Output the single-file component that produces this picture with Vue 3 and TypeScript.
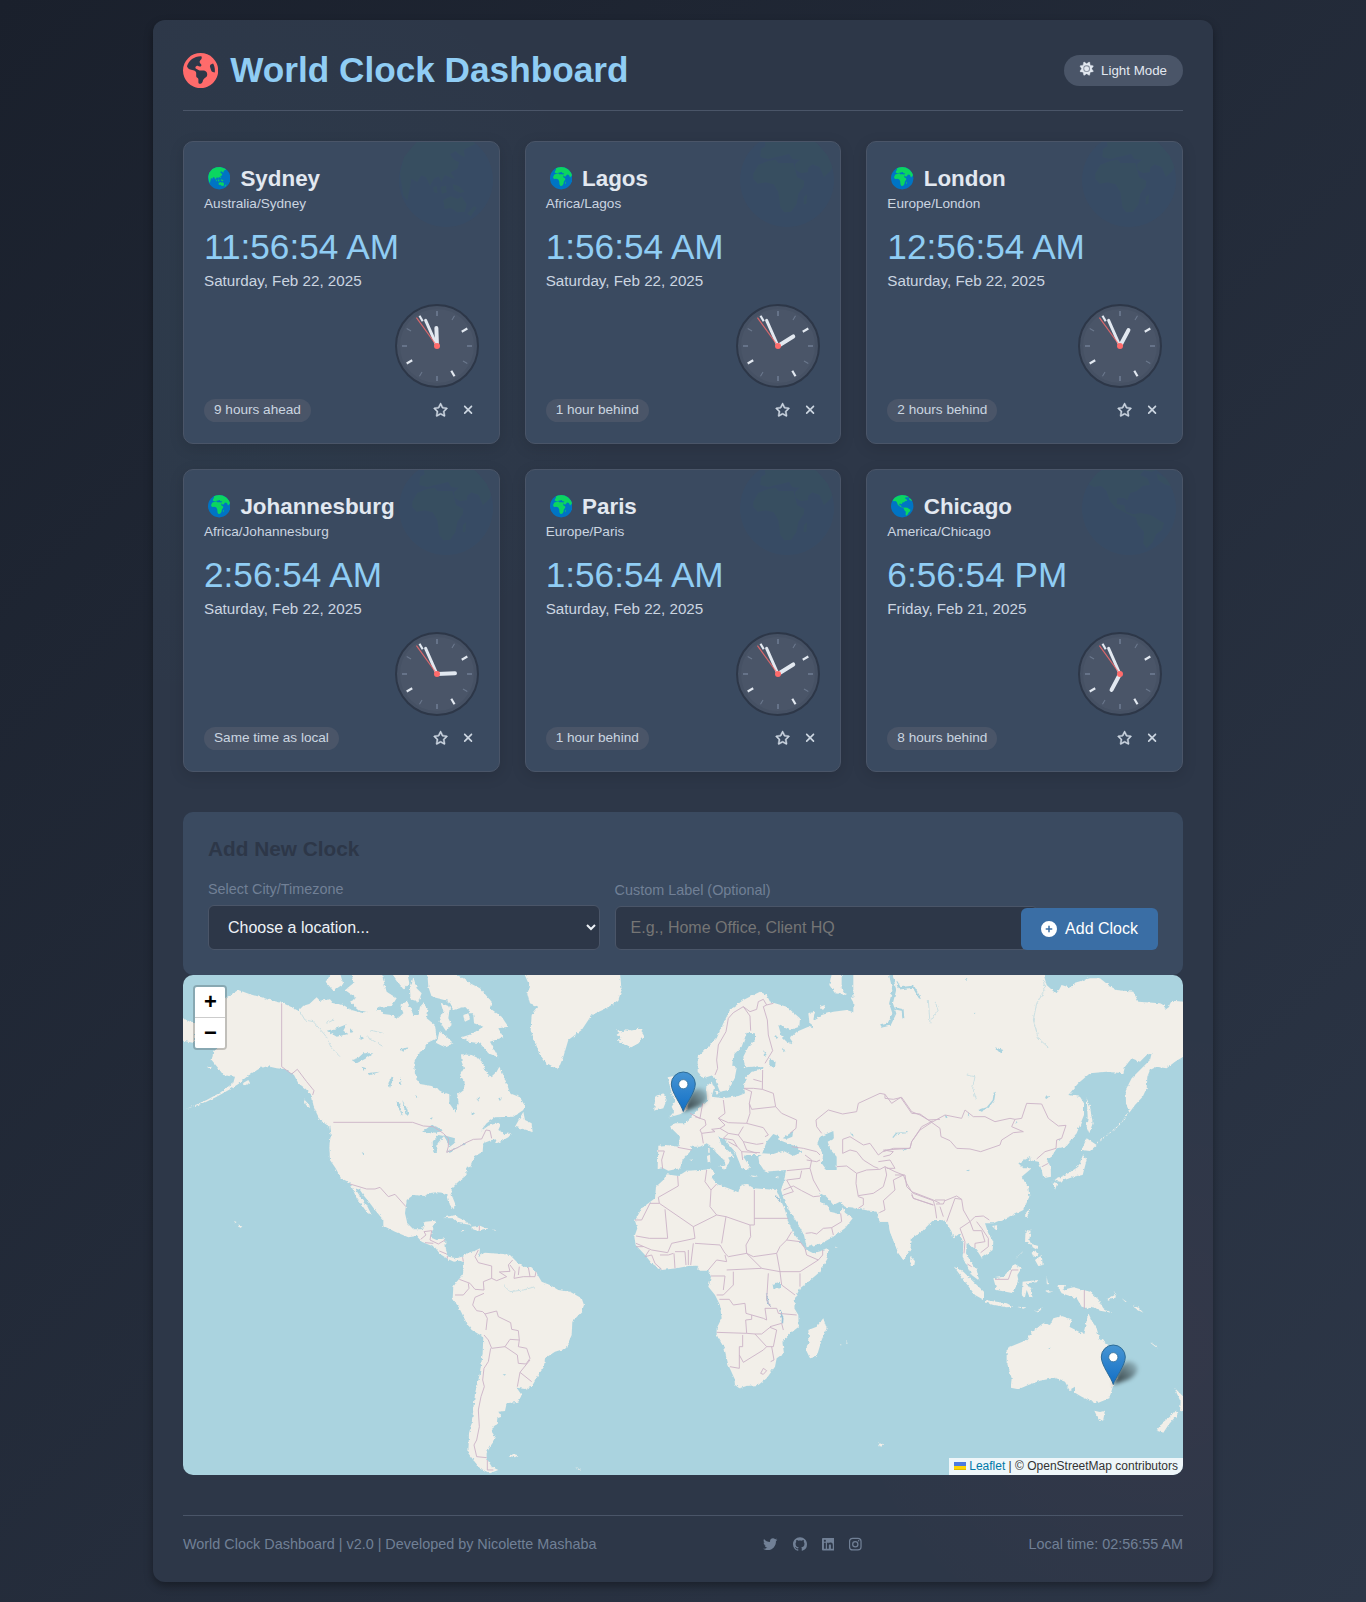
<script setup lang="ts">
type Globe = 'asia' | 'africa' | 'america'

interface City {
  name: string
  zone: string
  time: string
  date: string
  diff: string
  globe: Globe
}

const cities: City[] = [
  { name: 'Sydney', zone: 'Australia/Sydney', time: '11:56:54 AM', date: 'Saturday, Feb 22, 2025', diff: '9 hours ahead', globe: 'asia' },
  { name: 'Lagos', zone: 'Africa/Lagos', time: '1:56:54 AM', date: 'Saturday, Feb 22, 2025', diff: '1 hour behind', globe: 'africa' },
  { name: 'London', zone: 'Europe/London', time: '12:56:54 AM', date: 'Saturday, Feb 22, 2025', diff: '2 hours behind', globe: 'africa' },
  { name: 'Johannesburg', zone: 'Africa/Johannesburg', time: '2:56:54 AM', date: 'Saturday, Feb 22, 2025', diff: 'Same time as local', globe: 'africa' },
  { name: 'Paris', zone: 'Europe/Paris', time: '1:56:54 AM', date: 'Saturday, Feb 22, 2025', diff: '1 hour behind', globe: 'africa' },
  { name: 'Chicago', zone: 'America/Chicago', time: '6:56:54 PM', date: 'Friday, Feb 21, 2025', diff: '8 hours behind', globe: 'america' },
]

const globes: Record<Globe, { box: string; cx: number; cy: number; land: string }> = {
  africa: {
    box: '245 368 282 282', cx: 386, cy: 509,
    land: 'M318 386L345 374 386 368 430 375 475 398 508 436 522 470 516 482 497 500 484 470 462 462 450 472 448 486 428 488 412 478 410 462 425 448 402 446 392 430 372 436 352 440 330 446 306 440 308 416 322 408ZM285 490L300 464 330 452 352 448 360 458 405 458 416 500 438 512 436 528 420 550 414 582 398 604 378 606 366 590 360 545 346 522 322 516 298 520 285 505ZM437 560L446 552 444 580 436 582Z',
  },
  asia: {
    box: '775 398 282 282', cx: 916, cy: 539,
    land: 'M778 520L790 470 830 422 880 402 930 399 985 417 1005 430 985 440 970 448 972 470 955 462 945 452 928 462 940 478 955 486 950 505 930 516 942 536 926 530 912 524 902 545 894 528 880 534 868 556 856 530 842 525 830 545 812 535 808 560 800 600 788 585ZM878 560L888 558 890 578 880 576ZM900 560L916 556 918 576 904 580ZM936 552L955 558 972 574 958 578 940 568ZM908 600L930 588 952 596 962 588 978 612 972 634 950 636 930 622 912 626ZM980 640L1000 618 1008 622 990 648Z',
  },
  america: {
    box: '664 2 282 282', cx: 805, cy: 143,
    land: 'M684 72L710 38 750 14 800 3 850 9 890 28 872 34 850 30 838 44 860 54 868 74 846 76 828 92 808 98 800 120 790 112 770 112 768 132 790 134 796 154 818 162 840 158 870 164 892 178 910 188 904 208 886 222 876 246 858 264 848 250 850 214 832 194 826 172 800 160 766 142 748 122 738 92 722 76 700 80ZM888 40L915 52 932 78 912 72 892 58Z',
  },
}

function hands(time: string) {
  const [h, m, s] = time.split(' ')[0].split(':').map(Number)
  return { hour: ((h % 12) + m / 60) * 30, minute: m * 6, second: s * 6 }
}

const ticks = Array.from({ length: 12 }, (_, i) => ({
  angle: i * 30,
  kind: i % 3 === 2 ? 'bright' : i % 3 === 0 ? 'quarter' : 'minor',
  inner: i % 3 === 2 ? -28.6 : -30,
}))

const markers = [
  { id: 'london', x: 500.3, y: 136.5 },
  { id: 'sydney', x: 930.3, y: 409.5 },
]

const americas = [
  'M165 115L205 90 240 103 275 112 300 120 340 130 362 140 385 152 400 137 418 132 440 112 450 122 480 118 490 130 520 135 545 150 575 158 600 150 630 150 640 162 665 165 680 178 700 160 700 130 712 125 722 145 730 165 745 165 750 140 760 130 775 150 770 175 795 195 800 235 770 250 765 265 745 280 732 310 735 340 750 372 785 378 815 395 838 403 838 430 858 458 866 430 862 405 882 390 884 365 870 345 882 325 875 305 873 283 905 285 925 295 940 310 945 330 962 352 980 335 988 320 1000 345 1012 375 1020 400 1050 412 1063 435 1060 450 1030 470 975 472 950 490 930 515 955 497 985 488 992 494 985 510 1005 522 1025 520 1015 532 990 545 975 552 980 538 965 540 940 550 938 575 912 590 900 620 888 625 890 645 865 665 845 685 845 705 855 730 852 748 840 735 832 705 820 698 800 697 775 700 765 708 730 705 710 720 705 760 712 790 730 808 755 808 765 785 797 782 790 805 780 832 800 840 825 835 828 870 835 890 860 895 875 890 885 908 870 902 852 905 835 898 810 882 795 862 755 845 740 828 715 832 675 815 640 797 640 780 615 750 600 730 580 705 570 690 555 685 572 712 590 735 605 765 590 755 570 728 560 715 545 680 540 668 513 655 497 625 480 600 478 560 482 525 478 500 450 480 440 460 430 435 425 405 405 385 385 370 372 345 345 328 320 325 290 318 270 325 245 340 225 355 205 372 180 388 140 410 100 430 50 446 110 420 150 398 190 368 195 350 160 345 145 325 125 300 130 275 145 262 90 255Z',
  'M875 895L890 880 915 872 930 865 928 885 945 878 965 880 1000 882 1020 885 1040 905 1060 920 1085 922 1100 940 1115 965 1140 975 1165 990 1200 995 1235 1015 1242 1035 1235 1055 1207 1085 1205 1125 1188 1165 1155 1175 1125 1195 1122 1220 1105 1245 1085 1280 1065 1287 1040 1283 1055 1305 1045 1325 1010 1330 1005 1353 985 1355 995 1370 982 1375 980 1395 962 1410 978 1435 960 1460 950 1480 950 1495 965 1520 985 1530 960 1540 930 1525 910 1500 895 1480 897 1420 905 1390 910 1350 915 1300 930 1240 938 1180 940 1130 905 1110 888 1085 868 1045 848 1015 850 980 860 965 878 945 882 915Z',
  'M30 170L75 192 75 250 30 240ZM485 40L467 65 490 92 520 72 510 40ZM545 40L550 70 525 90 560 115 540 125 570 152 610 157 630 140 665 138 680 115 650 95 640 60 635 40ZM665 40L700 88 718 70 712 40ZM730 50L740 85 755 100 745 125 722 118 720 90ZM772 40L775 80 785 110 835 122 850 150 885 140 910 165 912 190 940 200 905 222 875 232 895 245 930 250 955 280 985 292 960 245 1000 232 985 205 1015 200 995 170 960 145 965 125 930 85 900 70 880 55 850 40ZM808 215L830 230 850 250 825 262 800 250ZM812 128L840 140 835 175 845 195 828 213 806 180 820 155ZM690 135L712 125 720 150 700 158ZM880 165L895 160 900 178 885 185Z',
  'M1062 40L1080 80 1072 100 1080 130 1105 140 1085 165 1082 210 1095 245 1110 285 1130 310 1165 328 1180 290 1195 240 1235 210 1265 165 1310 145 1345 120 1355 90 1350 40ZM1335 208L1350 220 1340 225 1352 232 1345 242 1380 263 1405 250 1422 230 1412 205 1385 212 1370 208 1360 217Z',
  'M1060 455L1035 500 1070 510 1088 517 1085 490 1065 480ZM820 774L850 766 880 780 905 795 870 790 850 775ZM905 800L930 797 955 808 930 813 905 808ZM872 810L886 811 880 815ZM965 809L978 809 977 812ZM1018 1488L1030 1482 1045 1486 1035 1492ZM1215 1520L1233 1530 1230 1532ZM205 793L217 800 210 804ZM192 783L200 786 196 789ZM445 462L460 470 488 492 480 496 455 480ZM402 418L418 435 420 445 408 435ZM172 774L178 776ZM218 370L235 360 240 368 225 376ZM110 320L125 320 122 328Z',
]

const americaLakes = [
  'M755 517L785 495 800 500 818 512 800 518 775 516ZM790 577L788 545 805 525 822 528 803 550 801 575ZM820 525L838 530 855 535 853 550 838 562 832 545ZM830 577L840 568 866 562 840 578ZM865 557L888 548 885 555ZM470 212L500 205 530 193 520 212 535 222 500 230ZM545 300L565 293 580 280 610 280 585 297 560 310ZM678 424L690 432 698 468 688 450ZM697 420L710 445 717 468 706 462ZM575 576L582 580 582 588ZM998 1243L1008 1242 1004 1247ZM590 340L630 335 600 346ZM925 880L932 888 926 890ZM655 370L665 350 670 352 660 385ZM740 405L745 410 738 414ZM570 225L582 235 572 240ZM540 205L550 215 540 218ZM690 268L715 262 700 275ZM575 320L590 325 580 332ZM920 415L930 410 925 425ZM985 415L995 412 990 424ZM690 350L696 372 690 375ZM905 455L915 460 905 468ZM780 475L788 472 784 482Z',
]

const americaBorders =
  'M335 130V320L365 342 382 328 410 365 432 392 428 405M490 487H728L760 498 790 500 820 520 835 535V560L830 577 865 562 888 548 910 538 935 537 948 510 960 512 965 535M540 672L590 687 615 687 630 682 655 710 675 703 708 740M752 838L768 825 762 815 785 812 780 840 805 852 825 840M765 848L790 850M808 873L830 882M832 888V896M878 892L880 905M925 870L915 890 925 908 965 918V955L980 962 1010 950 988 936 1020 934 1015 915 1028 900M1020 915L1035 935 1032 955 1060 950 1095 950 1098 935M1048 920L1045 945M1075 922L1080 950M868 958L900 970 915 988 942 990 940 965 965 955M855 1005L880 1005 897 985 895 970M942 1000L915 1012 908 1035 920 1052 938 1055 945 1062 980 1053 985 1070 1022 1088 1025 1108 1045 1112 1048 1140 1020 1138 1005 1160 965 1165 955 1140 942 1125M945 1062L952 1075 948 1110M1005 1160L1042 1185 1045 1210 1068 1212 1080 1195 1070 1165 1045 1160 1048 1140M962 1165L955 1205 942 1225 938 1260 943 1280 933 1310 925 1350 928 1400 920 1440 912 1455 920 1490 950 1493M952 1500V1530H970M1080 1200L1050 1237 1085 1265M1050 1237L1042 1280M928 797V812'

const west = [
  'M175 557L200 555 235 560 240 530 210 500 225 490 255 490 270 475 300 440 322 425 318 380 335 365 342 385 335 410 370 415 415 408 435 400 432 380 440 350 455 335 490 328 490 318 435 322 430 290 445 260 465 240 465 220 440 218 425 260 400 285 397 315 410 325 405 350 395 370 385 390 360 395 350 370 340 345 310 355 293 335 293 290 325 260 350 235 370 190 390 150 430 120 480 95 500 105 510 125 560 140 600 175 598 200 570 210 535 195 545 230 560 245 580 250 570 235 590 215 625 200 640 205 628 185 625 160 645 155 640 180 665 165 700 155 740 150 765 158 768 140 750 110 800 130 835 165 820 110 838 40 1100 40 1100 780 1000 780 965 815 935 835 930 870 910 900 895 880 870 815 865 785 840 785 832 770 850 762 825 745 780 745 735 740 720 725 700 735 680 710 660 700 660 725 685 740 690 755 720 762 728 742 735 758 758 775 735 805 700 830 665 850 620 862 612 825 590 785 570 755 550 715 543 690 553 660 558 630 530 632 495 635 478 610 475 590 485 585 440 585 430 590 450 622 440 630 425 625 415 600 405 575 375 540 355 528 365 555 405 590 385 592 390 605 378 620 372 600 350 580 335 560 320 550 300 560 275 560 270 575 248 600 240 625 205 632 190 625 173 627Z',
  'M200 643L235 648 260 632 300 630 338 628 342 640 335 652 350 672 385 685 415 697 422 675 440 672 462 685 500 688 530 690 540 715 555 750 565 785 580 820 600 845 620 870 640 880 685 867 683 895 660 935 620 970 600 985 585 1015 583 1045 595 1065 596 1100 565 1125 547 1145 552 1180 530 1195 525 1220 500 1255 475 1275 440 1278 418 1285 405 1275 403 1255 385 1215 373 1165 350 1125 350 1105 365 1075 360 1035 345 1005 325 980 333 950 325 932 300 932 290 917 265 918 230 925 185 930 155 910 135 885 107 855 103 830 112 805 105 782 125 745 165 715 168 680 190 660Z',
  'M670 1075L680 1105 665 1140 650 1190 630 1195 618 1170 628 1140 625 1110 650 1100ZM203 352L222 348 235 365 240 385 252 410 265 430 262 450 240 463 208 472 222 455 215 440 225 425 215 400ZM165 410L190 400 200 420 190 445 163 452ZM358 620L380 615 378 630ZM321 588L330 584 331 605 323 607ZM324 565L329 565 329 580 325 578ZM448 646L475 649 460 651ZM525 652L540 648 533 655ZM695 40L725 45 725 85 740 105 705 100 688 75ZM660 140L675 135 672 148 662 150ZM930 888L945 903 943 915 932 917ZM345 392L360 398 350 404ZM835 1450L850 1452 840 1460ZM705 860L714 862 706 863ZM435 350L442 352 436 360ZM270 600L283 598 276 603ZM45 208L60 217 50 225 62 232 55 242 90 263 115 250 132 230 122 205 95 212 70 217ZM740 1144L744 1147 738 1148ZM720 1153L726 1155 721 1156Z',
]

const westWater = [
  'M487 580L500 545 520 522 540 530 533 538 555 547 590 560 605 577 580 588 550 572 520 582ZM548 535L580 513 577 530 560 537ZM652 550L660 530 700 513 702 535 683 545 692 570 710 590 710 630 680 630 665 610 670 585ZM518 972L540 965 540 985 520 990ZM508 295L527 305 525 320 508 318ZM490 270L500 285 492 288ZM876 533L888 518 923 516 922 520 890 522 880 535ZM750 520L770 525 770 540ZM905 562L930 562 915 570ZM525 225L535 230 530 238ZM550 262L556 275 550 280Z',
]

const westBorders =
  'M430 140L400 158 385 175 378 215 355 255 350 300 353 325 345 345M430 140L450 168 452 212M430 140L450 155 470 148 475 125 490 118 500 135 490 140 502 180 505 225 518 272 495 310M500 135L520 130M488 330L487 388 520 400 527 440 455 448 448 430 455 395 432 385M487 388L460 385 432 385M460 358L485 365M527 440L545 460 590 480 588 505 570 520M448 430L450 460 440 490 385 488 355 475M370 420L375 460 355 475 375 495 360 505 335 508 345 515 305 520 300 510 318 495 315 480 300 475 308 430M300 475L270 460M300 475L285 470M305 520L310 550M233 562L275 570M173 573L193 573 185 600 188 627M440 490L490 503 505 525 495 530M430 500L415 525 430 545 470 553 490 550M415 525L385 520 360 505M385 520L370 535 400 540 412 560 425 575 428 600M412 560L385 545M430 545L440 570 470 580M425 575L480 578M650 500L648 480 685 450 728 462 770 455 775 430 840 400 855 403 855 415 880 418 905 412 935 455 960 465 985 480 1020 478M665 520L650 500M728 580L728 538 750 530 790 555 810 550 835 585 855 570 930 565 935 545 965 500 998 483M728 580L750 570 770 575 790 600 822 620 835 625M850 590L870 585 880 575 850 570M835 605L870 600 885 625 860 625M575 560L610 565 650 575 660 585M620 600L650 605 660 600M560 632L630 625 635 600 615 585M630 625L640 660 660 695M560 660L600 655 605 632M550 690L580 678 605 692 640 710 660 708M550 705L580 695 560 660M617 820L635 818 650 822 670 805 695 803 700 825M695 803L725 785 722 760M710 620L740 618 770 640 768 670 775 710 790 715 790 735 775 745M770 640L800 630 840 628 855 620 860 645 850 680 820 700 775 707M855 620L885 635 910 645 920 670 935 695 1000 720 1020 730M910 645L880 660 885 690 850 722 855 750 838 758M935 700L940 715 1000 735M233 648L235 678 175 712 178 730 150 730 125 780H105M178 730L280 800 350 765 378 770 450 795H463V690M463 775H565M320 630L315 665 333 690 330 740 350 765M333 690L350 672M195 748L203 835H148L108 828M280 800L285 835 215 850 203 878 155 870 108 850M108 860H130M285 850L360 855 375 880 385 890 440 880 438 855 452 830 450 795M378 770L365 850M440 880L485 925 540 935 600 935 655 900M440 880L460 890 530 880 540 860 560 840 575 815M560 840L600 845 615 865 620 885 655 900 668 885V870M530 880L540 935M600 940V980M148 870L135 890 155 885 165 910 185 928M180 885H205L220 880M222 880L225 925M225 875H255L258 915M265 870V915M280 850L272 915M375 885L380 905 350 900 325 930M380 930L485 925M400 935L400 975 370 1005 350 1005M333 948L375 948 370 990M358 1018H388L400 1035 435 1030 438 1060 490 1075 500 1080 495 1045 530 1045 535 1060 590 1065M540 935L545 975 585 1005M505 940L500 1020 512 1040M350 1117L440 1120 437 1080 455 1078V1065M440 1120L465 1122 500 1160 520 1160 530 1110 510 1102 485 1122 465 1122M428 1125V1160L418 1160V1225L390 1220M418 1185L430 1207 490 1170 500 1160M515 1160L522 1200 512 1205M482 1240L490 1225 500 1232 490 1243ZM510 1100L545 1090 550 1110'

const east = [
  'M-20 40H550L560 75 590 103 605 75 635 85 645 68 690 55 720 55 745 75 770 90 820 95 835 125 900 130 925 142 935 122 975 125 975 287 945 305 920 325 890 320 870 330 862 350 860 385 848 410 825 435 808 458 798 430 797 390 815 355 845 325 870 300 875 280 860 285 840 305 815 295 795 320 790 340 740 335 690 340 655 370 625 405 660 410 672 430 672 465 650 520 615 560 590 565 575 590 560 600 572 620 573 650 550 655 545 630 535 605 505 600 512 590 475 610 490 625 515 625 485 650 505 680 508 710 490 750 450 770 410 785 400 790 375 790 385 820 400 845 398 870 365 893 350 870 330 855 320 850 318 880 335 910 350 930 358 962 335 945 318 910 308 890 310 850 300 820 280 835 275 815 260 790 240 775 215 780 180 815 155 835 150 870 130 900 112 870 90 815 85 785 60 785 50 755 -20 745Z',
  'M440 1165L500 1140 515 1115 550 1090 570 1095 580 1075 605 1068 635 1078 628 1100 670 1122 678 1090 685 1060 697 1085 710 1105 718 1135 745 1155 765 1190 778 1215 775 1245 760 1275 748 1315 715 1328 690 1322 665 1310 645 1298 645 1280 628 1290 615 1265 585 1253 540 1262 505 1275 475 1288 452 1283 455 1255 440 1205ZM703 1352L720 1356 735 1352 730 1378 718 1383ZM943 1283L960 1300 975 1315 975 1350 960 1355 962 1325ZM945 1352L955 1360 925 1395 910 1418 890 1412 905 1390 930 1370Z',
  'M680 415L690 440 698 490 688 520 680 500 683 470ZM680 535L710 555 690 573 665 570ZM670 583L680 600 668 645 640 650 600 665 580 660 625 640 655 620ZM578 665L592 670 585 690ZM600 660L612 658 604 668ZM505 747L508 755 500 775 495 765ZM396 798L415 795 408 810ZM497 810L512 812 508 840 515 855 495 845ZM515 852L535 858 532 870 518 862ZM525 900L545 885 548 915 535 918ZM515 878L525 870 535 885 520 890ZM466 898L490 872 480 885ZM282 920L310 935 345 970 372 995 372 1020 345 1005 315 965ZM375 1020L410 1025 440 1030 460 1040 440 1042 400 1035 375 1027ZM400 955L430 950 465 912 485 925 472 945 475 960 460 1000 410 990ZM488 965L535 960 530 967 498 970 505 980 518 985 510 990 518 1012 508 1010 500 990 494 1015 485 1005ZM590 975L615 975 608 990 640 982 690 995 715 1018 730 1045 755 1058 720 1052 700 1040 690 1047 665 1040 650 1015 605 1000ZM740 1018L765 1005 768 1012 745 1022ZM470 1040L500 1042 490 1046ZM525 1055L548 1042 540 1052ZM868 1146L874 1148 893 1162 886 1160ZM785 1015L800 1025 797 1027ZM815 1035L835 1042 850 1058 830 1048ZM560 950L565 975 560 970ZM555 992L580 995 565 998ZM760 992L775 1005 768 1002Z',
]

const kurils = 'M802 462L790 480 775 498 750 518 730 535 712 550'

const eastWater = [
  'M355 450L380 442 398 420 402 394 407 396 403 420 385 445 365 455ZM97 532L108 518 143 516 142 520 110 522 100 534ZM125 567L148 564 135 571ZM405 262L430 270 420 280ZM318 627L330 630 325 634ZM342 155L346 157 343 160ZM316 58L322 58 320 63ZM255 468L263 468 258 475ZM325 455L328 470 323 465ZM565 1164L572 1165 568 1168ZM595 537L602 538 598 543ZM470 483L474 485 466 492ZM903 125L925 122 928 140 918 148ZM555 410L570 408 558 418Z',
]

const eastBorders =
  'M75 403L95 430 122 412 155 460 180 462 215 487 255 465 305 475 315 450 340 470 375 470 405 485 450 475 465 478 455 500 490 515 460 518 425 540 420 555 362 575 330 567 290 565 270 542 243 530 240 505 215 487 180 510 155 545 150 565 100 565 70 575M465 478L485 475 500 430 545 432 565 475 595 498 618 496 605 535 590 540 588 565 555 575 530 597M546 620L565 610M105 645L135 645 140 680 160 700 220 722 225 740M155 705L160 715 220 735M225 720H255L250 732H228M225 740L230 775M240 740L250 770M260 785L285 715 305 718 310 750 330 785 300 805 315 845 312 880M255 722L290 708 305 718M330 785L345 770 370 768 388 780M330 785L340 812 365 812 375 845 345 850 345 865M350 785L365 805 385 835 385 860 362 878M322 912L335 920M405 958L445 958 455 930 475 930M673 990V1047'
</script>

<template>
  <div class="page">
    <main class="container">
      <header class="header">
        <h1 class="title">
          <svg class="title-icon" viewBox="0 0 512 512"><path fill="currentColor" d="M57.7 193l9.4 16.4c8.3 14.5 21.9 25.2 38 29.8L163 255.7c17.2 4.9 29 20.6 29 38.5v39.9c0 11 6.2 21 16 25.9s16 14.9 16 25.9v39c0 15.6 14.9 26.9 29.9 22.6c16.1-4.6 28.6-17.5 32.7-33.8l2.8-11.2c4.2-16.9 15.2-31.4 30.3-40l8.1-4.6c15-8.5 24.2-24.5 24.2-41.7v-8.3c0-12.7-5.1-24.9-14.1-33.9l-3.9-3.9c-9-9-21.2-14.1-33.9-14.1H257c-11.1 0-22.1-2.9-31.8-8.4l-34.5-19.7c-4.3-2.5-7.6-6.5-9.2-11.2c-3.2-9.6 1.1-20 10.2-24.5l5.9-3c6.6-3.3 14.3-3.9 21.3-1.5l23.2 7.7c8.2 2.7 17.2-.4 21.9-7.5c4.7-7 4.2-16.3-1.2-22.8l-13.6-16.3c-10-12-9.9-29.5 .3-41.3l15.7-18.3c8.8-10.3 10.2-25 3.5-36.7l-2.4-4.2c-3.5-.2-6.9-.3-10.4-.3C163.1 48 84.4 108.9 57.7 193zM464 256c0-36.8-9.6-71.4-26.4-101.5L412 164.8c-15.7 6.3-23.8 23.8-18.5 39.8l16.9 50.7c3.5 10.4 12 18.3 22.6 20.9l29.1 7.3c1.2-9 1.8-18.2 1.8-27.5zM0 256a256 256 0 1 1 512 0A256 256 0 1 1 0 256z" /></svg>
          <span>World Clock Dashboard</span>
        </h1>
        <button class="mode">
          <svg class="mode-icon" viewBox="0 0 512 512"><path fill="currentColor" stroke="currentColor" stroke-width="14" d="M361.5 1.2c5 2.1 8.6 6.6 9.6 11.9L391 121l107.9 19.8c5.3 1 9.8 4.6 11.9 9.6s1.5 10.7-1.6 15.2L446.9 256l62.3 90.3c3.1 4.5 3.7 10.2 1.6 15.2s-6.6 8.6-11.9 9.6L391 391 371.1 498.9c-1 5.3-4.6 9.8-9.6 11.9s-10.7 1.5-15.2-1.6L256 446.9l-90.3 62.3c-4.5 3.1-10.2 3.7-15.2 1.6s-8.6-6.6-9.6-11.9L121 391 13.1 371.1c-5.3-1-9.8-4.6-11.9-9.6s-1.5-10.7 1.6-15.2L65.1 256 2.8 165.7c-3.1-4.5-3.7-10.2-1.6-15.2s6.6-8.6 11.9-9.6L121 121 140.9 13.1c1-5.3 4.6-9.8 9.6-11.9s10.7-1.5 15.2 1.6L256 65.1 346.3 2.8c4.5-3.1 10.2-3.7 15.2-1.6zM160 256a96 96 0 1 1 192 0 96 96 0 1 1 -192 0zm224 0a128 128 0 1 0 -256 0 128 128 0 1 0 256 0z" /></svg>
          <span>Light Mode</span>
        </button>
      </header>

      <section class="grid">
        <article v-for="city in cities" :key="city.name" class="card">
          <svg class="backdrop" :viewBox="globes[city.globe].box">
            <circle :cx="globes[city.globe].cx" :cy="globes[city.globe].cy" r="141" fill="#0070d0" />
            <path :d="globes[city.globe].land" fill="#0bb560" />
          </svg>
          <h2 class="name">
            <svg class="globe" :viewBox="globes[city.globe].box">
              <circle :cx="globes[city.globe].cx" :cy="globes[city.globe].cy" r="141" fill="#0074c4" />
              <path :d="globes[city.globe].land" fill="#0bd560" />
            </svg>
            <span>{{ city.name }}</span>
          </h2>
          <div class="zone">{{ city.zone }}</div>
          <div class="time">{{ city.time }}</div>
          <div class="date">{{ city.date }}</div>
          <svg class="analog" viewBox="-42 -42 84 84">
            <circle r="41" fill="#4a5568" stroke="#2d3748" stroke-width="2" />
            <circle r="38.5" fill="none" stroke="#2d3748" stroke-opacity=".12" stroke-width="3" />
            <line v-for="t in ticks" :key="t.angle" y1="-35" :y2="t.inner" :class="t.kind" :transform="`rotate(${t.angle})`" />
            <line y1="0" y2="-18" stroke="#e2e8f0" stroke-width="4" stroke-linecap="round" :transform="`rotate(${hands(city.time).hour})`" />
            <line y1="0" y2="-28" stroke="#e2e8f0" stroke-width="3" stroke-linecap="round" :transform="`rotate(${hands(city.time).minute})`" />
            <line y1="0" y2="-35" stroke="#ff6b6b" stroke-opacity=".8" stroke-width="1.2" :transform="`rotate(${hands(city.time).second})`" />
            <circle r="3" fill="#ff6b6b" />
          </svg>
          <div class="card-foot">
            <span class="badge">{{ city.diff }}</span>
            <span class="actions">
              <svg class="star" viewBox="0 0 576 512"><path fill="currentColor" stroke="currentColor" stroke-width="16" d="M287.9 0c9.2 0 17.6 5.2 21.6 13.5l68.6 141.3 153.2 22.6c9 1.3 16.5 7.6 19.3 16.3s.5 18.1-5.9 24.5L433.6 328.4l26.2 155.6c1.5 9-2.2 18.1-9.6 23.5s-17.3 6-25.3 1.7l-137-73.2L151 509.1c-8.1 4.3-17.9 3.7-25.3-1.7s-11.2-14.5-9.7-23.5l26.2-155.6L31.1 218.2c-6.5-6.4-8.7-15.9-5.9-24.5s10.3-14.9 19.3-16.3l153.2-22.6L266.3 13.5C270.4 5.2 278.7 0 287.9 0zm0 79L235.4 187.2c-3.5 7.1-10.2 12.1-18.1 13.3L99 217.9 184.9 303c5.5 5.5 8.1 13.3 6.8 21L171.4 443.7l105.2-56.2c7.1-3.8 15.6-3.8 22.6 0l105.2 56.2L384.2 324.1c-1.3-7.7 1.2-15.5 6.8-21l85.9-85.1L358.6 200.5c-7.8-1.2-14.6-6.1-18.1-13.3L287.9 79z" /></svg>
              <svg class="cross" viewBox="0 0 384 512"><path fill="currentColor" d="M342.6 150.6c12.5-12.5 12.5-32.8 0-45.3s-32.8-12.5-45.3 0L192 210.7 86.6 105.4c-12.5-12.5-32.8-12.5-45.3 0s-12.5 32.8 0 45.3L146.7 256 41.4 361.4c-12.5 12.5-12.5 32.8 0 45.3s32.8 12.5 45.3 0L192 301.3 297.4 406.6c12.5 12.5 32.8 12.5 45.3 0s12.5-32.8 0-45.3L237.3 256 342.6 150.6z" /></svg>
            </span>
          </div>
        </article>
      </section>

      <section class="add">
        <h3 class="add-title">Add New Clock</h3>
        <div class="form">
          <div class="field">
            <label>Select City/Timezone</label>
            <select class="select"><option>Choose a location...</option></select>
          </div>
          <div class="field">
            <label>Custom Label (Optional)</label>
            <input class="input" type="text" placeholder="E.g., Home Office, Client HQ" />
          </div>
          <button class="submit">
            <svg viewBox="0 0 512 512"><path fill="currentColor" d="M256 512A256 256 0 1 0 256 0a256 256 0 1 0 0 512zM232 344V280H168c-13.3 0-24-10.7-24-24s10.7-24 24-24h64V168c0-13.3 10.7-24 24-24s24 10.7 24 24v64h64c13.3 0 24 10.7 24 24s-10.7 24-24 24H280v64c0 13.3-10.7 24-24 24s-24-10.7-24-24z" /></svg>
            <span>Add Clock</span>
          </button>
        </div>
      </section>

      <section class="map">
        <svg class="world" viewBox="0 0 1000 500">
          <defs>
            <filter id="coast" x="0" y="0" width="1000" height="500" filterUnits="userSpaceOnUse">
              <feTurbulence type="fractalNoise" baseFrequency="0.3" numOctaves="2" seed="4" />
              <feDisplacementMap in="SourceGraphic" scale="3.2" xChannelSelector="R" yChannelSelector="G" />
            </filter>
            <filter id="soft" x="-50%" y="-50%" width="200%" height="200%"><feGaussianBlur stdDeviation="2" /></filter>
            <linearGradient id="pin" x1="0" y1="0" x2="0" y2="1">
              <stop offset="0" stop-color="#4795d3" />
              <stop offset="1" stop-color="#126fc6" />
            </linearGradient>
            <linearGradient id="shade" x1="0" y1="1" x2="1" y2="0">
              <stop offset="0" stop-color="#000" stop-opacity=".75" />
              <stop offset=".5" stop-color="#000" stop-opacity=".45" />
              <stop offset="1" stop-color="#000" stop-opacity=".08" />
            </linearGradient>
          </defs>
          <g filter="url(#coast)">
            <g transform="translate(-13 -15) scale(.33333)">
              <path v-for="(d, i) in americas" :key="i" :d="d" class="land" />
              <path v-for="(d, i) in americaLakes" :key="'l' + i" :d="d" class="water" />
              <path d="M390 155L405 180 430 185 465 225 485 265 510 290M1000 975L1020 995 1060 990 1095 980M600 210L640 220M470 190L490 180M590 230L640 260" class="river" />
            </g>
            <g transform="translate(417 -15) scale(.33333)">
              <path v-for="(d, i) in west" :key="i" :d="d" class="land" />
              <path v-for="(d, i) in westWater" :key="'w' + i" :d="d" class="water" />
            </g>
            <g transform="translate(677 -15) scale(.33333)">
              <path v-for="(d, i) in east" :key="i" :d="d" class="land" />
              <path :d="kurils" class="islets" />
              <path v-for="(d, i) in eastWater" :key="'w' + i" :d="d" class="water" />
              <path d="M93 45L103 90 93 130 103 160 88 192 62 198" class="gulf" />
              <path d="M103 145L128 150 130 175M110 65L120 85 160 80 180 115" class="inlet" />
              <path d="M550 60L555 90 530 130 520 180 535 235 565 262M205 120L210 190M225 125L235 150 215 180M320 345L345 350 338 385 350 420" class="river" />
            </g>
            <g transform="translate(417 -15) scale(.33333)">
              <path d="M500 1000L503 1025 512 1040M540 1050L548 1075 547 1090M528 705L540 725" class="narrow" />
            </g>
          </g>
          <g transform="translate(-13 -15) scale(.33333)"><path :d="americaBorders" class="border" /></g>
          <g transform="translate(417 -15) scale(.33333)"><path :d="westBorders" class="border" /></g>
          <g transform="translate(677 -15) scale(.33333)"><path :d="eastBorders" class="border" /></g>
          <g v-for="m in markers" :key="m.id" :transform="`translate(${m.x} ${m.y})`">
            <path d="M0 0L7 -18Q15 -27 23 -20Q27 -11 15 -5Z" fill="url(#shade)" filter="url(#soft)" />
            <path d="M0 0C-2 -7 -12 -19 -12 -27.5A12 12 0 0 1 12 -27.5C12 -19 2 -7 0 0Z" fill="url(#pin)" stroke="#2e6c97" stroke-width="1" />
            <circle cy="-27.3" r="4.6" fill="#fff" stroke="#2e6c97" stroke-width=".8" />
          </g>
        </svg>
        <div class="zoom">
          <button>+</button>
          <button>−</button>
        </div>
        <div class="credit">
          <svg viewBox="0 0 12 8"><path fill="#4c7be1" d="M0 0h12v4H0z" /><path fill="#ffd500" d="M0 4h12v3H0z" /><path fill="#e0bc00" d="M0 7h12v1H0z" /></svg>
          <a>Leaflet</a> | © OpenStreetMap contributors
        </div>
      </section>

      <footer class="footer">
        <span>World Clock Dashboard | v2.0 | Developed by Nicolette Mashaba</span>
        <div class="social">
          <svg viewBox="0 0 512 512" class="tw"><path fill="currentColor" d="M459.37 151.716c.325 4.548.325 9.097.325 13.645 0 138.72-105.583 298.558-298.558 298.558-59.452 0-114.68-17.219-161.137-47.106 8.447.974 16.568 1.299 25.34 1.299 49.055 0 94.213-16.568 130.274-44.832-46.132-.975-84.792-31.188-98.112-72.772 6.498.974 12.995 1.624 19.818 1.624 9.421 0 18.843-1.3 27.614-3.573-48.081-9.747-84.143-51.98-84.143-102.985v-1.299c13.969 7.797 30.214 12.67 47.431 13.319-28.264-18.843-46.781-51.005-46.781-87.391 0-19.492 5.197-37.36 14.294-52.954 51.655 63.675 129.3 105.258 216.365 109.807-1.624-7.797-2.599-15.918-2.599-24.04 0-57.828 46.782-104.934 104.934-104.934 30.213 0 57.502 12.67 76.67 33.137 23.715-4.548 46.456-13.32 66.599-25.34-7.798 24.366-24.366 44.833-46.132 57.827 21.117-2.273 41.584-8.122 60.426-16.243-14.292 20.791-32.161 39.308-52.628 54.253z" /></svg>
          <svg viewBox="0 0 16 16" class="gh"><path fill="currentColor" d="M8 0C3.58 0 0 3.58 0 8c0 3.54 2.29 6.53 5.47 7.59.4.07.55-.17.55-.38 0-.19-.01-.82-.01-1.49-2.01.37-2.53-.49-2.69-.94-.09-.23-.48-.94-.82-1.13-.28-.15-.68-.52-.01-.53.63-.01 1.08.58 1.23.82.72 1.21 1.87.87 2.33.66.07-.52.28-.87.51-1.07-1.78-.2-3.64-.89-3.64-3.95 0-.87.31-1.59.82-2.15-.08-.2-.36-1.02.08-2.12 0 0 .67-.21 2.2.82.64-.18 1.32-.27 2-.27s1.36.09 2 .27c1.53-1.04 2.2-.82 2.2-.82.44 1.1.16 1.92.08 2.12.51.56.82 1.27.82 2.15 0 3.07-1.87 3.75-3.65 3.95.29.25.54.73.54 1.48 0 1.07-.01 1.93-.01 2.2 0 .21.15.46.55.38A8.01 8.01 0 0 0 16 8c0-4.42-3.58-8-8-8z" /></svg>
          <svg viewBox="0 0 448 512" class="li"><path fill="currentColor" d="M416 32H31.9C14.3 32 0 46.5 0 64.3v383.4C0 465.5 14.3 480 31.9 480H416c17.6 0 32-14.5 32-32.3V64.3c0-17.8-14.4-32.3-32-32.3zM135.4 416H69V202.2h66.5V416zm-33.2-243c-21.3 0-38.5-17.3-38.5-38.5S80.9 96 102.2 96c21.2 0 38.5 17.3 38.5 38.5 0 21.3-17.2 38.5-38.5 38.5zm282.1 243h-66.4V312c0-24.8-.5-56.7-34.5-56.7-34.6 0-39.9 27-39.9 54.9V416h-66.4V202.2h63.7v29.2h.9c8.9-16.8 30.6-34.5 62.9-34.5 67.2 0 79.7 44.3 79.7 101.9V416z" /></svg>
          <svg viewBox="0 0 448 512" class="li" fill="none" stroke="currentColor" stroke-width="44"><rect x="20" y="52" width="408" height="408" rx="112" /><circle cx="224" cy="256" r="93" /><circle cx="343" cy="137" r="27" fill="currentColor" stroke="none" /></svg>
        </div>
        <span>Local time: 02:56:55 AM</span>
      </footer>
    </main>
  </div>
</template>

<style>
body {
  margin: 0;
  background: #1a202c;
}
</style>

<style scoped>
* {
  box-sizing: border-box;
}
.page {
  min-height: 1602px;
  padding: 20px 0;
  background: linear-gradient(135deg, #1a202c, #2d3748);
  font-family: 'Liberation Sans', Arial, sans-serif;
  color: #e2e8f0;
}
.container {
  width: 1060px;
  height: 1562px;
  margin: 0 auto;
  padding: 30px;
  border-radius: 12px;
  background:
    radial-gradient(circle at 10% 20%, rgba(56, 178, 172, 0.03), transparent 25%),
    radial-gradient(circle at 95% 85%, rgba(255, 80, 107, 0.03), transparent 20%),
    #2d3748;
  box-shadow: 0 4px 8px rgba(0, 0, 0, 0.35);
}
.header {
  display: flex;
  justify-content: space-between;
  align-items: center;
  height: 61px;
  padding-bottom: 20px;
  border-bottom: 1px solid #4a5568;
}
.title {
  display: flex;
  align-items: center;
  gap: 12px;
  margin: 0;
  font-size: 35.2px;
  line-height: 40px;
  color: #90cdf4;
}
.title-icon {
  width: 35.2px;
  height: 35.2px;
  margin-top: 1px;
  color: #ff6b6b;
}
.mode {
  display: flex;
  align-items: center;
  gap: 8px;
  height: 31px;
  padding: 0 16px;
  border: 0;
  border-radius: 20px;
  background: #4a5568;
  color: #e2e8f0;
  font: 500 13.33px 'Liberation Sans', Arial, sans-serif;
}
.mode-icon {
  width: 13.33px;
  height: 13.33px;
  margin-top: -2px;
  overflow: visible;
}
.grid {
  display: grid;
  grid-template-columns: repeat(3, 1fr);
  gap: 25px;
  margin-top: 30px;
}
.card {
  position: relative;
  display: flex;
  flex-direction: column;
  height: 303px;
  padding: 20px;
  border: 1px solid #4a5568;
  border-radius: 10px;
  background: #3a4a60;
  box-shadow: 0 4px 15px rgba(0, 0, 0, 0.12);
  overflow: hidden;
}
.backdrop {
  position: absolute;
  top: -9px;
  right: 6px;
  width: 94px;
  height: 94px;
  opacity: 0.04;
}
.name {
  display: flex;
  align-items: center;
  gap: 10px;
  height: 33px;
  margin: 0;
  padding-left: 4px;
  font-size: 22.4px;
  line-height: 33px;
}
.globe {
  width: 22.4px;
  height: 22.4px;
}
.zone {
  margin-top: 1px;
  font-size: 13.6px;
  line-height: 15px;
  color: #cbd5e0;
}
.time {
  margin-top: 16px;
  font-size: 35.2px;
  line-height: 39px;
  color: #90cdf4;
}
.date {
  margin-top: 6px;
  font-size: 15.2px;
  line-height: 17px;
  color: #cbd5e0;
}
.analog {
  align-self: flex-end;
  flex: none;
  width: 84px;
  height: 84px;
  margin-top: 15px;
}
.bright {
  stroke: #e2e8f0;
  stroke-width: 2.2;
}
.quarter {
  stroke: #667389;
  stroke-width: 2;
}
.minor {
  stroke: #6b788d;
  stroke-width: 1.1;
}
.card-foot {
  display: flex;
  justify-content: space-between;
  align-items: center;
  margin-top: 11px;
}
.badge {
  height: 23px;
  padding: 0 10px;
  border-radius: 15px;
  background: #4a5568;
  font-size: 13.6px;
  line-height: 22px;
  color: #cbd5e0;
}
.actions {
  display: flex;
  align-items: center;
  gap: 15px;
  padding-right: 5px;
  color: #cbd5e0;
}
.star {
  width: 15.2px;
  height: 13.6px;
  margin-top: -1px;
  overflow: visible;
}
.cross {
  width: 10.2px;
  height: 13.6px;
  margin-top: -1px;
}
.add {
  height: 163px;
  margin-top: 40px;
  padding: 25px;
  border-radius: 10px;
  background: #3a4a60;
}
.add-title {
  margin: 0 0 20px;
  font-size: 20.8px;
  line-height: 24px;
  color: #2d3748;
}
.form {
  display: flex;
  align-items: flex-end;
  gap: 15px;
}
.field {
  flex: 1 1 0;
  min-width: 0;
  display: flex;
  flex-direction: column;
}
.field label {
  margin-bottom: 8px;
  font-size: 14.4px;
  line-height: 16px;
  color: #718096;
}
.select,
.input {
  border: 1px solid #4a5568;
  border-radius: 6px;
  background: #2d3748;
  color: #fff;
  font: 16px 'Liberation Sans', Arial, sans-serif;
}
.select {
  height: 45px;
  padding: 0 15px;
  color: #edf2f7;
}
.input {
  width: calc(100% + 32px);
  height: 44px;
  padding: 0 15px;
}
.input::placeholder {
  color: #757575;
}
.submit {
  position: relative;
  display: flex;
  align-items: center;
  gap: 8px;
  height: 42px;
  padding: 0 20px;
  border: 0;
  border-radius: 6px;
  background: #3a6ea5;
  color: #fff;
  font: 16px 'Liberation Sans', Arial, sans-serif;
}
.submit svg {
  width: 16px;
  height: 16px;
}
.map {
  position: relative;
  height: 500px;
  border-radius: 10px;
  background: #aad3df;
  overflow: hidden;
}
.world {
  display: block;
  width: 1000px;
  height: 500px;
}
.land {
  fill: #f2efe9;
}
.water {
  fill: #aad3df;
}
.islets {
  fill: none;
  stroke: #f2efe9;
  stroke-width: 3;
  stroke-dasharray: 7 5;
}
.river {
  fill: none;
  stroke: #cbe0e3;
  stroke-width: 3;
}
.gulf {
  fill: none;
  stroke: #aad3df;
  stroke-width: 11;
}
.inlet {
  fill: none;
  stroke: #aad3df;
  stroke-width: 6;
}
.narrow {
  fill: none;
  stroke: #9dc3d8;
  stroke-width: 5;
}
.border {
  fill: none;
  stroke: #ccb5c8;
  stroke-width: 2.8;
  stroke-linejoin: round;
}
.zoom {
  position: absolute;
  top: 10px;
  left: 10px;
  display: flex;
  flex-direction: column;
  border: 2px solid rgba(0, 0, 0, 0.2);
  border-radius: 4px;
  background-clip: padding-box;
}
.zoom button {
  width: 30px;
  height: 30px;
  padding: 0 0 0 1px;
  border: 0;
  background: #fff;
  color: #000;
  font: bold 22px/30px 'Liberation Sans', Arial, sans-serif;
}
.zoom button:first-child {
  height: 31px;
  border-bottom: 1px solid #ccc;
  border-radius: 2px 2px 0 0;
}
.zoom button:last-child {
  border-radius: 0 0 2px 2px;
}
.credit {
  position: absolute;
  right: 0;
  bottom: 0;
  padding: 0 5px;
  background: rgba(255, 255, 255, 0.8);
  font-size: 12px;
  line-height: 16.8px;
  color: #333;
}
.credit a {
  color: #0078a8;
}
.credit svg {
  width: 12px;
  height: 8px;
  margin-right: 3.4px;
}
.footer {
  display: flex;
  justify-content: space-between;
  align-items: center;
  margin-top: 40px;
  padding-top: 20px;
  border-top: 1px solid #4a5568;
  font-size: 14.4px;
  line-height: 16px;
  color: #718096;
}
.social {
  display: flex;
  align-items: center;
  gap: 15px;
}
.social svg {
  height: 14.4px;
}
.tw {
  width: 14.4px;
}
.gh {
  width: 14px;
}
.li {
  width: 12.6px;
}
</style>
